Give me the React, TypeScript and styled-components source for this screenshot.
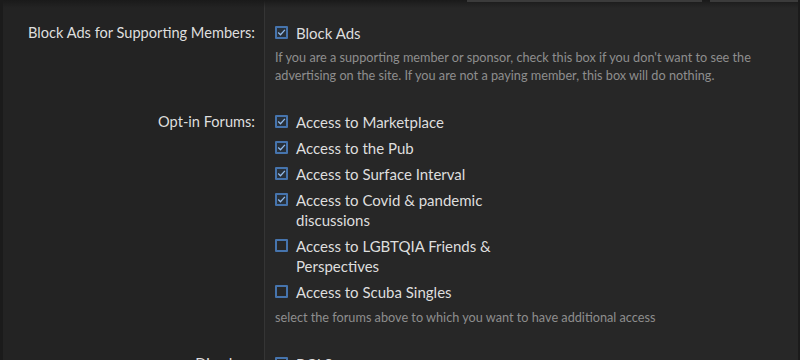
import * as React from 'react'
import styled, {createGlobalStyle} from 'styled-components'

const GlobalStyle = createGlobalStyle`
    html, body {
        margin: 0;
        padding: 0;
        background: #232323;
        overflow: hidden;
    }
    #root {
        width: 800px;
        height: 360px;
    }
`

const Page = styled.div`
    position: relative;
    width: 800px;
    height: 360px;
    overflow: hidden;
    background: #232323;
    border-left: 3px solid #1b1b1b;
    border-right: 2px solid #1b1b1b;
    box-sizing: border-box;
    font-family: Lato, 'Noto Sans', sans-serif;
    color: #dcdcdc;
`

const TopShade = styled.div`
    position: absolute;
    left: 0;
    right: 0;
    top: 0;
    height: 8px;
    background: linear-gradient(#1a1a1a, rgba(30, 30, 30, 0));
    z-index: 2;
`

const TopInputs = styled.div`
    position: absolute;
    top: 0;
    left: 464px;
    right: 0;
    display: flex;
    gap: 8px;
    z-index: 3;
`

const InputEdge = styled.div<{$w: number}>`
    width: ${p => p.$w}px;
    height: 2px;
    background: #3b3b3b;
`

const Form = styled.div`
    display: grid;
    grid-template-columns: 261px 1fr;
    height: 100%;
`

const Row = styled.div`
    display: contents;
`

const Label = styled.div<{$first?: boolean}>`
    padding: ${p => (p.$first ? 23 : 0)}px 9px 0 0;
    text-align: right;
    font-size: 14.6px;
    line-height: 20px;
    color: #dedede;
`

const Field = styled.div<{$first?: boolean; $tail?: boolean}>`
    background: #272727;
    border-left: 1px solid #353535;
    padding: ${p => (p.$first ? 23 : 0)}px 0 ${p => (p.$tail ? 28 : 0)}px 10px;
`

const Option = styled.label`
    display: flex;
    align-items: flex-start;
    gap: 8px;
    width: 220px;
    font-size: 15px;
    line-height: 20px;
    color: #dedede;
    & + & {
        margin-top: 6px;
    }
`

const Box = styled.span<{$on: boolean}>`
    flex: 0 0 auto;
    box-sizing: border-box;
    width: 13px;
    height: 13px;
    margin-top: 3px;
    border: 2px solid #4674ad;
    border-radius: 1px;
    display: flex;
    align-items: center;
    justify-content: center;
    background: ${p => (p.$on ? '#283039' : 'transparent')};
`

const Help = styled.div<{$mt: number}>`
    margin-top: ${p => p.$mt}px;
    font-size: 12.7px;
    line-height: 18px;
    color: #8e8e8e;
    max-width: 490px;
`

const Check = ({on}: {on: boolean}) => (
    <Box $on={on}>
        {on && (
            <svg width='9' height='9' viewBox='0 0 9 9'>
                <path d='M1.2 4.5 L3.5 6.7 L7.9 1.9' fill='none' stroke='#93bbea' strokeWidth='1.3'/>
            </svg>
        )}
    </Box>
)

const forums = [
    {text: 'Access to Marketplace', on: true},
    {text: 'Access to the Pub', on: true},
    {text: 'Access to Surface Interval', on: true},
    {text: 'Access to Covid & pandemic discussions', on: true},
    {text: 'Access to LGBTQIA Friends & Perspectives', on: false},
    {text: 'Access to Scuba Singles', on: false},
]

export default function App() {
    return (
        <Page>
            <GlobalStyle/>
            <TopShade/>
            <TopInputs>
                <InputEdge $w={240}/>
                <InputEdge $w={90}/>
            </TopInputs>
            <Form>
                <Row>
                    <Label $first>Block Ads for Supporting Members:</Label>
                    <Field $first $tail>
                        <Option><Check on/>Block Ads</Option>
                        <Help $mt={5}>
                            If you are a supporting member or sponsor, check this box if you don't want to see the
                            advertising on the site. If you are not a paying member, this box will do nothing.
                        </Help>
                    </Field>
                </Row>
                <Row>
                    <Label>Opt-in Forums:</Label>
                    <Field $tail>
                        {forums.map(f => (
                            <Option key={f.text}><Check on={f.on}/>{f.text}</Option>
                        ))}
                        <Help $mt={6}>select the forums above to which you want to have additional access</Help>
                    </Field>
                </Row>
                <Row>
                    <Label>Dive Log:</Label>
                    <Field>
                        <Option><Check on={false}/>BGLS</Option>
                    </Field>
                </Row>
            </Form>
        </Page>
    )
}
